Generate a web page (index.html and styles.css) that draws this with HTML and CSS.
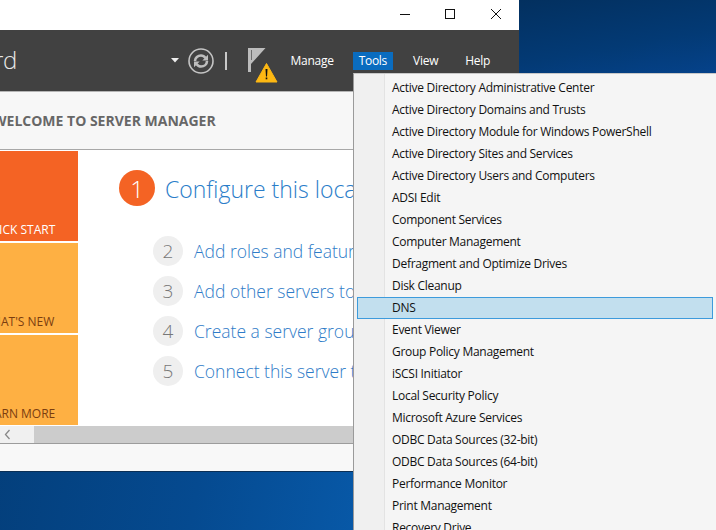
FILE: index.html
```html
<!DOCTYPE html>
<html lang="en">
<head>
<meta charset="utf-8">
<title>Server Manager</title>
<link rel="stylesheet" href="styles.css">
</head>
<body>
<div class="desktop">
  <div class="window">
    <div class="titlebar">
      <svg class="winctl" width="120" height="30" viewBox="0 0 120 30" aria-hidden="true">
        <path d="M6 14.5H16" stroke="#111" fill="none"/>
        <rect x="51.5" y="9.5" width="9" height="9" stroke="#111" fill="none"/>
        <path d="M97 9L107 19M107 9L97 19" stroke="#111" fill="none"/>
      </svg>
    </div>
    <header class="header">
      <div class="title">Dashboard</div>
      <div class="tools">
        <svg class="caret" width="8" height="5" viewBox="0 0 8 5"><path d="M0 0H8L4 4.5Z" fill="#eee"/></svg>
        <svg class="refresh" width="26" height="26" viewBox="0 0 26 26">
          <circle cx="13" cy="13" r="12" fill="none" stroke="#c4c4c4" stroke-width="1.6"/>
          <path d="M7 13C7 9.500 10 7.500 13 7.500C15 7.500 16.500 8.500 17.500 10" fill="none" stroke="#bdbdbd" stroke-width="2.600"/>
          <path d="M20 6.800V12.500H14.300Z" fill="#bdbdbd"/>
          <path d="M19 13C19 16.500 16 18.500 13 18.500C11 18.500 9.500 17.500 8.500 16" fill="none" stroke="#bdbdbd" stroke-width="2.600"/>
          <path d="M6 19.200V13.500H11.700Z" fill="#bdbdbd"/>
        </svg>
        <div class="divider"></div>
        <svg class="flag" width="31" height="36" viewBox="0 0 31 36">
          <path d="M0 1H17.500L3 17V25H0Z" fill="#bcbcbc"/>
          <rect x="3" y="3" width="1" height="10" fill="#6d6d6d"/>
          <path d="M18.500 16.500L29 35H8Z" fill="#fdb813" stroke="#fdb813" stroke-linejoin="round"/>
          <path d="M17.500 22H19.500L19 29.500H18Z" fill="#111"/>
          <rect x="17.700" y="30.500" width="1.600" height="1.800" fill="#111"/>
        </svg>
        <nav class="nav">
          <span class="nav-item">Manage</span>
          <span class="nav-item is-open">Tools</span>
          <span class="nav-item">View</span>
          <span class="nav-item">Help</span>
        </nav>
      </div>
    </header>
    <div class="crumb"><h1 class="welcome">WELCOME TO SERVER MANAGER</h1></div>
    <div class="content">
      <div class="tiles">
        <div class="tile tile-orange">QUICK START</div>
        <div class="tile tile-amber">WHAT'S NEW</div>
        <div class="tile tile-amber">LEARN MORE</div>
      </div>
      <div class="steps">
        <div class="step-main"><span class="badge-main">1</span><span class="step-main-text">Configure this local server</span></div>
        <div class="step"><span class="badge">2</span><span class="step-text">Add roles and features</span></div>
        <div class="step"><span class="badge">3</span><span class="step-text">Add other servers to manage</span></div>
        <div class="step"><span class="badge">4</span><span class="step-text">Create a server group</span></div>
        <div class="step"><span class="badge">5</span><span class="step-text">Connect this server to cloud services</span></div>
      </div>
    </div>
    <div class="scrollbar">
      <div class="thumb">
        <svg width="7" height="11" viewBox="0 0 7 11"><path d="M5.500 1L1.500 5.500L5.500 10" fill="none" stroke="#888" stroke-width="1.300"/></svg>
      </div>
    </div>
    <div class="footer"></div>
  </div>
  <div class="menu">
    <div class="menu-item">Active Directory Administrative Center</div>
    <div class="menu-item">Active Directory Domains and Trusts</div>
    <div class="menu-item">Active Directory Module for Windows PowerShell</div>
    <div class="menu-item">Active Directory Sites and Services</div>
    <div class="menu-item">Active Directory Users and Computers</div>
    <div class="menu-item">ADSI Edit</div>
    <div class="menu-item">Component Services</div>
    <div class="menu-item">Computer Management</div>
    <div class="menu-item">Defragment and Optimize Drives</div>
    <div class="menu-item">Disk Cleanup</div>
    <div class="menu-item is-hover">DNS</div>
    <div class="menu-item">Event Viewer</div>
    <div class="menu-item">Group Policy Management</div>
    <div class="menu-item">iSCSI Initiator</div>
    <div class="menu-item">Local Security Policy</div>
    <div class="menu-item">Microsoft Azure Services</div>
    <div class="menu-item">ODBC Data Sources (32-bit)</div>
    <div class="menu-item">ODBC Data Sources (64-bit)</div>
    <div class="menu-item">Performance Monitor</div>
    <div class="menu-item">Print Management</div>
    <div class="menu-item">Recovery Drive</div>
  </div>
</div>
</body>
</html>
```
FILE: styles.css
```css
* { box-sizing: border-box; }
html, body { margin: 0; padding: 0; height: 100%; overflow: hidden; }
body { font-family: "Open Sans", "Noto Sans", sans-serif; }

.desktop {
  position: relative;
  width: 716px;
  height: 530px;
  overflow: hidden;
  background:
    linear-gradient(100deg, #033b74 0%, #054a90 35%, #0a66bd 75%, #0a68c0 100%);
}
.desktop::before {
  content: "";
  position: absolute;
  left: 519px;
  top: 0;
  width: 197px;
  height: 73px;
  background: linear-gradient(170deg, #03305f 0%, #033a75 60%, #05428a 100%);
}

.window {
  position: absolute;
  left: -120px;
  top: 0;
  width: 639px;
  height: 472px;
  display: flex;
  flex-direction: column;
  background: #fff;
  border-bottom: 1px solid #0b2f55;
}

.titlebar { height: 30px; flex: none; background: #fff; display: flex; justify-content: flex-end; }
.winctl { margin-right: 5px; }

.header {
  height: 62px;
  flex: none;
  background: #414141;
  display: flex;
  align-items: center;
  justify-content: space-between;
  border-bottom: 1px solid #b5b5b5;
  color: #fff;
}
.title { font-size: 24px; font-weight: 300; color: #e8e8e8; margin: 0 0 2px 20px; letter-spacing: -.3px; }
.tools { display: flex; align-items: center; }
.caret { margin-right: 9px; }
.refresh { margin-right: 11px; }
.divider { width: 2px; height: 18px; background: #c8c8c8; margin-right: 21px; }
.flag { margin-top: 8px; margin-right: 6px; }
.nav { display: flex; font-size: 12px; margin-right: 23px; letter-spacing: -.28px; }
.nav-item { height: 18px; line-height: 18px; padding: 0 6px; margin-left: 14px; white-space: nowrap; }
.nav-item:first-child { margin-left: 0; }
.nav-item:last-child { margin-left: 15px; }
.nav-item.is-open { margin-left: 13px; background: #0a6cbf; }

.crumb {
  height: 58px;
  flex: none;
  background: #f7f7f7;
  border-bottom: 1px solid #a8a8a8;
  display: flex;
  align-items: center;
  padding-left: 120px;
}
.welcome {
  margin: 0 0 1px -7px;
  font-size: 14px;
  font-weight: 700;
  color: #676767;
  white-space: nowrap;
}

.content { height: 276px; flex: none; display: flex; background: #fff; overflow: hidden; }
.tiles { width: 198px; flex: none; display: flex; flex-direction: column; gap: 2px; padding-top: 1px; }
.tile {
  height: 90px;
  display: flex;
  align-items: flex-end;
  padding: 0 0 3px 101px;
  font-size: 12px;
  white-space: nowrap;
  color: #7a3d10;
}
.tile-orange { background: #f46324; color: #fff; }
.tile-amber { background: #feb043; }

.steps { padding: 20px 0 0 41px; display: flex; flex-direction: column; flex: none; }
.step-main { display: flex; align-items: center; height: 36px; margin-bottom: 30px; }
.badge-main {
  width: 36px;
  height: 36px;
  border-radius: 50%;
  background: #f46324;
  color: #fff;
  font-size: 24px;
  font-weight: 300;
  display: flex;
  align-items: center;
  justify-content: center;
}
.step-main-text { margin: 2px 0 0 10px; font-size: 23px; font-weight: 300; color: #2a7dc9; white-space: nowrap; }
.step { display: flex; align-items: center; height: 30px; margin: 0 0 10px 34px; }
.badge {
  width: 30px;
  height: 30px;
  border-radius: 50%;
  background: #efefef;
  color: #777;
  font-size: 19px;
  font-weight: 300;
  display: flex;
  align-items: center;
  justify-content: center;
}
.step-text { margin-left: 11px; font-size: 17.500px; color: #2f7cc8; font-weight: 300; white-space: nowrap; }

.scrollbar { height: 18px; flex: none; background: #cccccc; border-bottom: 1px solid #9c9c9c; }
.thumb { width: 154px; height: 17px; background: #f0f0f0; padding-left: 124px; display: flex; align-items: center; }
.footer { flex: 1; background: #f8f8f8; }

.menu {
  position: absolute;
  left: 353px;
  top: 73px;
  width: 363px;
  height: 457px;
  padding: 3px 3px 0 3px;
  overflow: hidden;
  border-left: 1px solid #9a9a9a;
  border-top: 1px solid #c8c8c8;
  background: linear-gradient(90deg, #f0f0f0 0, #f0f0f0 30px, #e3e3e3 30px, #e3e3e3 31px, #f5f5f5 31px);
}
.menu-item {
  height: 22px;
  line-height: 20px;
  padding-left: 34px;
  font-size: 12px;
  letter-spacing: -.28px;
  color: #111;
  white-space: nowrap;
  border: 1px solid transparent;
}
.is-hover { background: #c2dfee; border-color: #3d9bdc; }
```
